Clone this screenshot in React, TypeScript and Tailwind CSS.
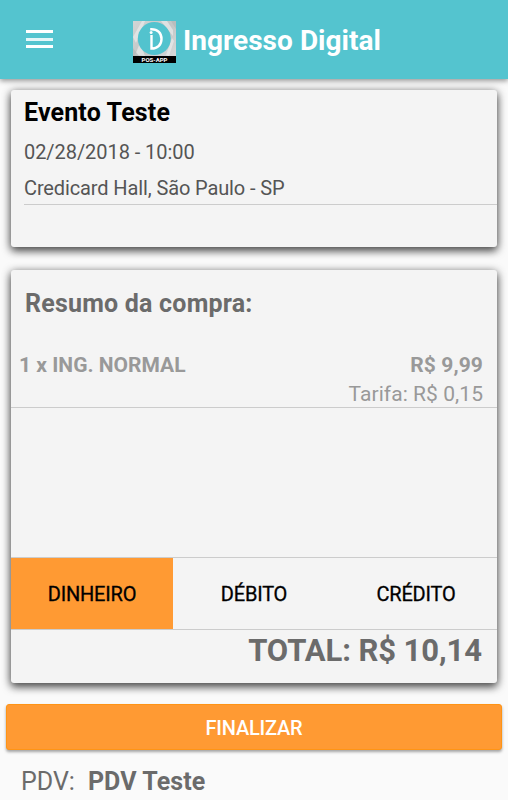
const cardClass =
  "mx-[11px] rounded-[3px] bg-[#f4f4f4] shadow-[0_4px_9px_rgba(0,0,0,0.6),0_1px_10px_rgba(0,0,0,0.35)]";

function Logo() {
  return (
    <svg width="43" height="42" viewBox="0 0 43 42" className="block shrink-0">
      <defs>
        <linearGradient id="silver" x1="0" y1="0" x2="1" y2="1">
          <stop offset="0" stopColor="#d2d5d5" />
          <stop offset="0.5" stopColor="#c3c6c6" />
          <stop offset="1" stopColor="#dcdede" />
        </linearGradient>
      </defs>
      <rect width="43" height="42" fill="url(#silver)" />
      <path d="M0 16L9 0h3L3 22zM28 0l12 15V9L34 0zM2 34l5-12 5 13zM33 34l6-17 2 3-5 15z" fill="#e9ebeb" opacity=".7" />
      <path d="M0 27l6 8H0zM38 0l5 8V0z" fill="#b2b6b6" opacity=".6" />
      <circle cx="21.3" cy="17.6" r="16.5" fill="#52c3ce" />
      <path d="M17.2 8.2h1.3c6.3 0 10 4.100 10 9.700s-3.700 9.700-10 9.700V14" fill="none" stroke="#fff" strokeWidth="2.400" />
      <circle cx="18.100" cy="11.600" r="1.500" fill="#fff" />
      <rect y="35" width="43" height="7" fill="#000" />
      <text x="21.500" y="40.700" fill="#fff" fontFamily="Roboto, sans-serif" fontSize="6" fontWeight="700" textAnchor="middle" textLength="26" lengthAdjust="spacingAndGlyphs">POS-APP</text>
    </svg>
  );
}

function Header() {
  return (
    <header className="relative z-10 flex h-[79px] bg-[#54c4cf] shadow-[0_2px_5px_rgba(0,0,0,0.4)]">
      <button aria-label="Menu" className="mt-[30px] ml-[26px] flex h-[18px] w-[27px] flex-col justify-between">
        <span className="h-[3px] w-full bg-white" />
        <span className="h-[3px] w-full bg-white/85" />
        <span className="h-[3px] w-full bg-white" />
      </button>
      <div className="mt-[21px] ml-[80px] flex">
        <Logo />
        <h1 className="ml-[7px] text-[28px] leading-[40px] font-bold tracking-[0.04px] text-white">Ingresso Digital</h1>
      </div>
    </header>
  );
}

function EventCard() {
  return (
    <section className={cardClass + " mt-[11px] h-[157px] pl-[13px]"}>
      <h2 className="pt-[5px] text-[25px] leading-[36px] font-bold tracking-[0.15px] text-black">Evento Teste</h2>
      <p className="mt-[3px] text-[20px] leading-[36px] tracking-[-0.06px] text-[#555]">02/28/2018 - 10:00</p>
      <p className="h-[35px] border-b border-[#cccccc] text-[20px] leading-[36px] tracking-[-0.12px] text-[#555]">
        Credicard Hall, São Paulo - SP
      </p>
    </section>
  );
}

const payments = ["DINHEIRO", "DÉBITO", "CRÉDITO"];

function Summary() {
  return (
    <section className={cardClass + " mt-[23px] flex h-[413px] flex-col"}>
      <h2 className="mt-[16px] ml-[14px] text-[25px] leading-[36px] font-bold tracking-[0.21px] text-[#6b6b6b]">Resumo da compra:</h2>
      <div className="mt-[29px] flex h-[57px] justify-between border-b border-[#cccccc] pr-[14px] pl-[8px] text-[21px] leading-[29px] text-[#999]">
        <strong>1 x ING. NORMAL</strong>
        <div className="text-right">
          <p className="font-bold tracking-[0.1px]">R$ 9,99</p>
          <p className="tracking-[0.06px]">Tarifa: R$ 0,15</p>
        </div>
      </div>
      <div className="mt-[149px] grid h-[73px] shrink-0 grid-cols-3 border-y border-[#cccccc]">
        {payments.map((name, i) => (
          <button
            key={name}
            className={
              "h-[71px] text-[20px] leading-[72px] tracking-[-0.2px] text-black [-webkit-text-stroke:0.3px_#000] " +
              (i === 0 ? "bg-[#ff9a33]" : "")
            }
          >
            {name}
          </button>
        ))}
      </div>
      <p className="mr-[15px] text-right text-[31px] leading-[42px] font-bold tracking-[-0.07px] text-[#6b6b6b]">TOTAL: R$ 10,14</p>
    </section>
  );
}

export default function App() {
  return (
    <div className="h-[800px] w-[508px] overflow-hidden bg-[#fafafa] font-[Roboto,sans-serif] whitespace-nowrap">
      <Header />
      <EventCard />
      <Summary />
      <button className="mt-[21px] ml-[6px] block h-[46px] w-[496px] rounded-[3px] border border-[#ff9415] bg-[#ff9a33] text-[20px] leading-[46px] font-medium tracking-[-0.2px] text-white shadow-[0_2px_3px_rgba(0,0,0,0.35)]">
        FINALIZAR
      </button>
      <footer className="mt-[13px] flex pl-[21px] text-[25px] leading-[38px] text-[#6b6b6b]">
        <span>PDV:</span>
        <strong className="ml-[13px] tracking-[0.1px]">PDV Teste</strong>
      </footer>
    </div>
  );
}
